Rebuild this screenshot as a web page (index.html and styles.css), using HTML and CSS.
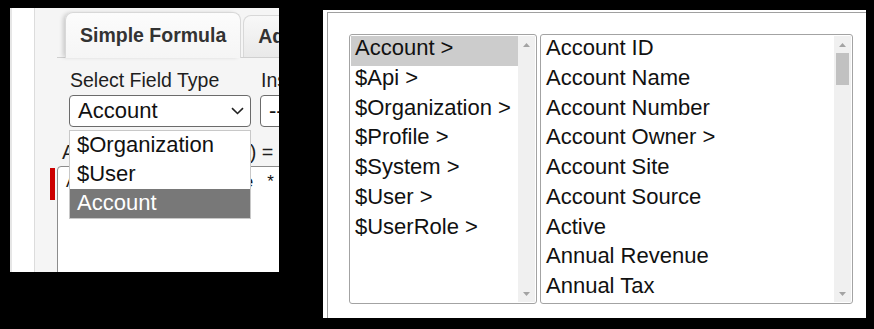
FILE: index.html
```html
<!DOCTYPE html>
<html lang="en">
<head>
    <meta charset="UTF-8">
    <meta name="viewport" content="width=device-width, initial-scale=1.0">
    <title>Formula field picker</title>
    <link rel="stylesheet" href="styles.css">
</head>
<body>
    <div class="stage">
        <!-- Formula editor with the field type dropdown open -->
        <section class="formula-panel">
            <div class="gutter"></div>
            <div class="editor">
                <nav class="tabs">
                    <span class="tab tab-active">Simple Formula</span>
                    <span class="tab">Advanced Formula</span>
                </nav>

                <div class="fields">
                    <div class="field">
                        <label class="field-label">Select Field Type</label>
                        <div class="select">
                            <span class="select-value">Account</span>
                            <svg class="chevron" width="13" height="8" viewBox="0 0 13 8">
                                <path d="M1 1.2l5.5 5.3 5.5-5.3" />
                            </svg>
                        </div>
                    </div>
                    <div class="field">
                        <label class="field-label">Insert Field</label>
                        <div class="select">
                            <span class="select-value">-- None --</span>
                        </div>
                    </div>
                </div>

                <div class="formula-label">Account Tax (Percent) =</div>
                <div class="formula-row">
                    <span class="required-bar"></span>
                    <div class="formula-input">Account.AnnualRevenue   *</div>
                </div>
            </div>

            <ul class="dropdown">
                <li>$Organization</li>
                <li>$User</li>
                <li class="is-selected">Account</li>
            </ul>
        </section>

        <!-- Field picker: object list and field list -->
        <section class="picker-panel">
            <div class="picker">
                <div class="listbox listbox-types">
                    <ul class="list">
                        <li class="is-selected">Account &gt;</li>
                        <li>$Api &gt;</li>
                        <li>$Organization &gt;</li>
                        <li>$Profile &gt;</li>
                        <li>$System &gt;</li>
                        <li>$User &gt;</li>
                        <li>$UserRole &gt;</li>
                    </ul>
                    <div class="scrollbar">
                        <span class="scroll-btn">
                            <svg width="7" height="4" viewBox="0 0 7 4"><path d="M0 4h7L3.5 0z" /></svg>
                        </span>
                        <span class="scroll-track"></span>
                        <span class="scroll-btn">
                            <svg width="7" height="4" viewBox="0 0 7 4"><path d="M0 0h7L3.5 4z" /></svg>
                        </span>
                    </div>
                </div>

                <div class="listbox listbox-fields">
                    <ul class="list">
                        <li>Account ID</li>
                        <li>Account Name</li>
                        <li>Account Number</li>
                        <li>Account Owner &gt;</li>
                        <li>Account Site</li>
                        <li>Account Source</li>
                        <li>Active</li>
                        <li>Annual Revenue</li>
                        <li>Annual Tax</li>
                    </ul>
                    <div class="scrollbar">
                        <span class="scroll-btn">
                            <svg width="7" height="4" viewBox="0 0 7 4"><path d="M0 4h7L3.5 0z" /></svg>
                        </span>
                        <span class="scroll-track">
                            <span class="scroll-thumb"></span>
                        </span>
                        <span class="scroll-btn">
                            <svg width="7" height="4" viewBox="0 0 7 4"><path d="M0 0h7L3.5 4z" /></svg>
                        </span>
                    </div>
                </div>
            </div>
        </section>
    </div>
</body>
</html>
```

FILE: styles.css
```css
* {
    box-sizing: border-box;
}

body {
    margin: 0;
    background-color: #000;
    font-family: 'Liberation Sans', Arial, sans-serif;
    color: #111;
}

.stage {
    display: flex;
    align-items: flex-start;
    gap: 44px;
    padding: 8px 0 0 10px;
}

/* ---- formula editor ---- */

.formula-panel {
    position: relative;
    display: flex;
    width: 269px;
    height: 264px;
    overflow: hidden;
    background-color: #fff;
}

.gutter {
    flex: 0 0 25px;
    border-left: 2px solid #e6e6e6;
    border-right: 1px solid #dcdcdc;
    background-color: #fff;
}

.editor {
    flex: 1;
    min-width: 0;
    padding: 4px 0 0 15px;
    background-color: #f5f5f5;
}

.tabs {
    display: flex;
    align-items: flex-end;
    gap: 2px;
    height: 46px;
    margin-left: 7px;
    padding-left: 8px;
    border-bottom: 1px solid #d0d0d0;
}

.tab {
    flex: none;
    display: flex;
    align-items: center;
    height: 42px;
    padding: 0 14px;
    border: 1px solid #d8d8d8;
    border-bottom: none;
    border-radius: 8px 8px 0 0;
    background: linear-gradient(#f8f8f8, #e9e9e9);
    font-size: 19.5px;
    font-weight: bold;
    color: #333;
    white-space: nowrap;
}

.tab-active {
    height: 46px;
    margin-bottom: -1px;
    background: linear-gradient(#fcfcfc, #f5f5f5);
    box-shadow: -3px 0 4px -1px rgba(0, 0, 0, 0.18);
}

.fields {
    display: flex;
    gap: 9px;
    margin: 11px 0 0 19px;
}

.field {
    flex: 0 0 182px;
}

.field-label {
    display: block;
    padding-left: 1px;
    font-size: 19.5px;
    line-height: 22px;
    color: #1e1e1e;
    white-space: nowrap;
}

.select {
    display: flex;
    align-items: center;
    justify-content: space-between;
    height: 32px;
    margin-top: 4px;
    padding: 0 6px 0 8px;
    border: 1px solid #6b6b6b;
    border-radius: 4px;
    background-color: #fff;
}

.select-value {
    font-size: 22px;
    line-height: 30px;
    white-space: nowrap;
}

.chevron path {
    fill: none;
    stroke: #222;
    stroke-width: 1.6;
}

.formula-label {
    margin: 14px 0 0 12px;
    font-size: 19.8px;
    line-height: 22px;
    color: #1e1e1e;
    white-space: nowrap;
}

.formula-row {
    display: flex;
    align-items: flex-start;
    gap: 2px;
    margin-top: 3px;
}

.required-bar {
    flex: 0 0 5px;
    height: 32px;
    margin-top: 2px;
    background-color: #cc0000;
}

.formula-input {
    flex: 0 0 260px;
    height: 130px;
    padding: 5px 0 0 8px;
    border: 1px solid #8c8c8c;
    border-radius: 4px 0 0 0;
    background-color: #fff;
    font-size: 17px;
    line-height: 20px;
    white-space: pre;
}

.dropdown {
    position: absolute;
    top: 122px;
    left: 59px;
    width: 182px;
    margin: 0;
    padding: 0;
    list-style: none;
    border: 1px solid #c8c8c8;
    background-color: #fff;
}

.dropdown li {
    height: 29px;
    padding-left: 7px;
    font-size: 22px;
    line-height: 28px;
    white-space: nowrap;
}

.dropdown .is-selected {
    background-color: #787878;
    color: #fff;
}

/* ---- field picker ---- */

.picker-panel {
    width: 543px;
    height: 308px;
    margin-top: 2px;
    padding: 2px 0 0 4px;
    overflow: hidden;
    background-color: #fff;
}

.picker {
    display: flex;
    align-items: flex-start;
    gap: 3px;
    height: 100%;
    padding: 21px 0 0 21px;
    border-top: 1px solid #a0a0a0;
    border-left: 1px solid #a0a0a0;
}

.listbox {
    display: flex;
    height: 270px;
    padding: 1px;
    border: 1px solid #a3a3a3;
    border-radius: 3px;
    background-color: #fff;
}

.listbox-types {
    width: 188px;
}

.listbox-fields {
    width: 313px;
}

.list {
    flex: 1;
    min-width: 0;
    margin: 0;
    padding: 0;
    list-style: none;
    overflow: hidden;
}

.list li {
    height: 29.75px;
    padding-left: 4px;
    font-size: 22px;
    line-height: 24.5px;
    white-space: nowrap;
}

.list .is-selected {
    background-color: #cccccc;
}

.scrollbar {
    flex: 0 0 17px;
    display: flex;
    flex-direction: column;
    background-color: #f0f0f0;
}

.scroll-btn {
    display: flex;
    align-items: center;
    justify-content: center;
    height: 17px;
}

.scroll-btn path {
    fill: #a3a3a3;
}

.scroll-track {
    flex: 1;
    padding: 0 2px;
}

.scroll-thumb {
    display: block;
    height: 32px;
    background-color: #c1c1c1;
}
```
